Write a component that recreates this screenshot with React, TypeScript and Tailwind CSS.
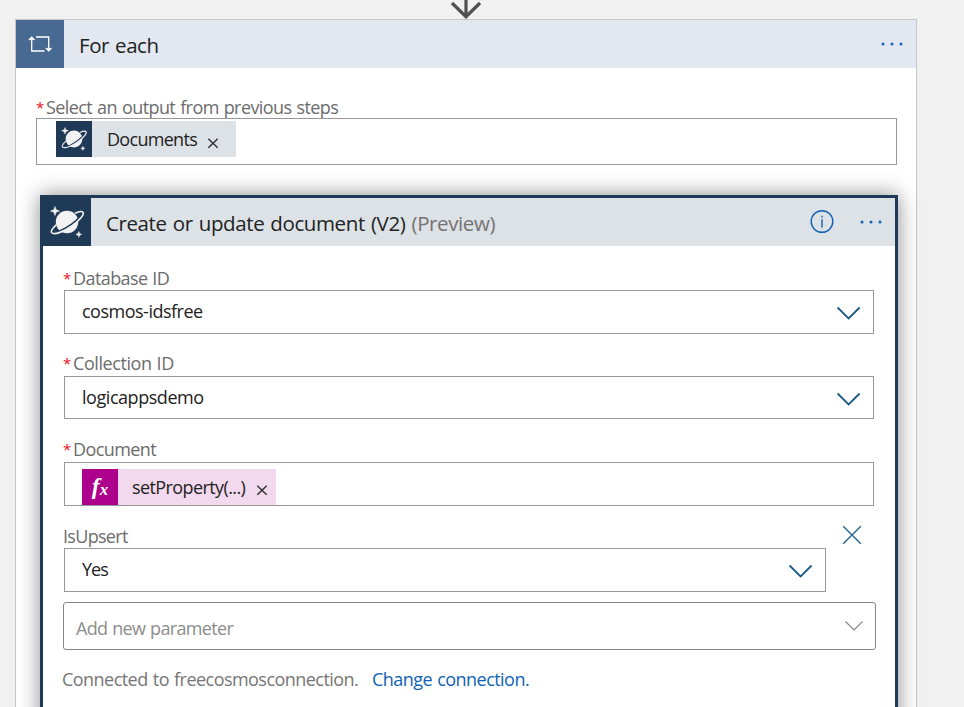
import type { ReactNode } from 'react';

function Planet({ className }: { className: string }) {
  return (
    <svg viewBox="0 0 48 48" className={className} fill="none">
      <circle cx="24" cy="24" r="11.2" fill="#f2f2f2" />
      <path d="M9.4 34C13 35.4 21.5 31.6 28.7 26.3C35.5 21.2 39.3 16.5 38.8 14.8" stroke="#1e3a56" strokeWidth="1.9" />
      <path d="M13.2 26.8C9.5 30.2 7.6 33.4 8.8 34.8C11.2 37.2 21 33.7 29.5 27.5C37 22 41.7 16.3 40 14.3C38.6 12.9 35.4 13.7 32 15.3" stroke="#f2f2f2" strokeWidth="1.6" />
      <path d="M12 8.5L13.2 11.8L16.5 13L13.2 14.2L12 17.5L10.8 14.2L7.5 13L10.8 11.8Z" fill="#f2f2f2" stroke="#f2f2f2" strokeWidth=".5" />
      <path d="M35.8 33.5L36.6 35.6L38.7 36.4L36.6 37.2L35.8 39.3L35 37.2L32.9 36.4L35 35.6Z" fill="#f2f2f2" stroke="#f2f2f2" strokeWidth=".5" />
    </svg>
  );
}

function Dots() {
  return (
    <svg viewBox="0 0 24 4" className="h-1 w-6 shrink-0" fill="#0f62b5">
      <circle cx="3" cy="2" r="1.5" />
      <circle cx="12" cy="2" r="1.5" />
      <circle cx="21" cy="2" r="1.5" />
    </svg>
  );
}

function Chevron() {
  return (
    <svg viewBox="0 0 24 14" className="mt-0.5 h-3.5 w-6 shrink-0" fill="none" stroke="#1c5a86" strokeWidth="1.8">
      <path d="M.6 1.5L11.6 12.4L22.6 1.5" />
    </svg>
  );
}

function Remove() {
  return (
    <svg viewBox="0 0 12 12" className="size-3 shrink-0" fill="none" stroke="#333" strokeWidth="1.5">
      <path d="M1.3 1.7L10.7 10.8M10.7 1.7L1.3 10.8" />
    </svg>
  );
}

function Label({ children, required = true }: { children: ReactNode; required?: boolean }) {
  return (
    <div className="flex h-6 items-center whitespace-nowrap text-[18px] leading-6 tracking-[-0.58px] [word-spacing:0.7px] text-[#6c6c6c]">
      {required && <span className="w-2.5 shrink-0 text-[15px] leading-6 text-[#e81123]">*</span>}
      {children}
    </div>
  );
}

export default function App() {
  return (
    <div className="flex h-[707px] w-[964px] flex-col overflow-hidden bg-[#f1f1f1] font-['Open_Sans','Noto_Sans',sans-serif] text-[#222]">
      <div className="flex h-[19px] shrink-0 pl-[450px]">
        <svg viewBox="0 0 32 19" className="h-[19px] w-8" fill="none" stroke="#505050" strokeWidth="3.2">
          <path d="M16 0V16.5M2 3L16 16.7L30 3" />
        </svg>
      </div>
      <section className="ml-[15px] h-[720px] w-[902px] shrink-0 border border-[#c6c6c6] bg-white">
        <header className="flex h-12 items-center bg-[#e3e8f0] pr-3">
          <div className="flex size-12 items-center justify-center bg-[#486991]">
            <svg viewBox="0 0 24 18" className="h-[18px] w-6" fill="none" stroke="#fff" strokeWidth="1.3">
              <path d="M3.7 2V16H16.5M.9 5L3.7 2.2L6.5 5M8 2H20.7V16M17.9 13L20.7 15.8L23.5 13" />
              <path d="M1.5 4.8L3.7 2.4L5.9 4.8ZM18.5 13.2L20.7 15.6L22.9 13.2Z" fill="#fff" stroke="none" />
            </svg>
          </div>
          <h1 className="mt-0.5 ml-[15px] flex-1 text-[20.5px] leading-7 tracking-[-0.4px] [word-spacing:1px]">For each</h1>
          <Dots />
        </header>
        <div className="px-5 pt-[27px]">
          <Label><span className="tracking-[-0.59px] [word-spacing:0.9px]">Select an output from previous steps</span></Label>
          <div className="-mt-px -mr-px h-[47px] border border-[#979797] pt-0.5 pl-[19px]">
            <div className="flex h-9 w-[180px] items-center bg-[#dde2e6]">
              <div className="size-9 bg-[#1e3a56]"><Planet className="size-9" /></div>
              <span className="ml-[15px] w-[100px] text-[18px] tracking-[-0.7px] whitespace-nowrap">Documents</span>
              <div className="mt-2"><Remove /></div>
            </div>
          </div>
        </div>
        <section className="mt-[30px] ml-6 h-[560px] w-[858px] border-[3px] border-[#1e3a56] bg-white shadow-[0_0_20px_rgba(0,0,0,0.45)]">
          <header className="flex h-12 items-center bg-[#dde2e6] pr-3">
            <div className="size-12 bg-[#1e3a56]"><Planet className="size-12" /></div>
            <h2 className="mt-0.5 ml-[15px] flex-1 text-[20.5px] leading-7 tracking-[-0.4px] [word-spacing:1.2px] whitespace-nowrap">
              Create or update document (V2) <span className="text-[#737373]">(Preview)</span>
            </h2>
            <svg viewBox="0 0 24 24" className="mr-[25px] size-6" fill="none" stroke="#0f62b5" strokeWidth="1.4">
              <circle cx="12" cy="11.5" r="10.8" />
              <path d="M12 9.3V17.5M12 5.7V7.5" />
            </svg>
            <Dots />
          </header>
          <div className="flex flex-col pt-5 pr-[18px] pl-5">
            <Label>Database ID</Label>
            <div className="ml-px flex h-11 w-[810px] items-center justify-between border border-[#979797] pr-3 pl-[17px] text-[18px] tracking-[-0.5px]"><span className="-mt-px">cosmos-idsfree</span><Chevron /></div>
            <div className="mt-[17px]"><Label><span className="tracking-[-0.42px]">Collection ID</span></Label></div>
            <div className="mt-px ml-px flex h-[43px] w-[810px] items-center justify-between border border-[#979797] pr-3 pl-[17px] text-[18px] tracking-[-0.45px]"><span>logicappsdemo</span><Chevron /></div>
            <div className="mt-[18px]"><Label>Document</Label></div>
            <div className="mt-px ml-px h-11 w-[810px] border border-[#979797] pt-1.5 pl-[17px]">
              <div className="flex h-9 w-[194px] items-center bg-[#f2d9ed]">
                <div className="flex size-9 items-center justify-center bg-[#ad008c] font-['Liberation_Serif',serif] text-[24px] leading-none font-bold text-white italic"><span className="-mt-0.5">f</span><span className="mt-1 text-[17px]">x</span></div>
                <span className="ml-[14px] w-[124px] text-[18px] tracking-[-0.6px] whitespace-nowrap">setProperty(...)</span>
                <div className="mt-1.5"><Remove /></div>
              </div>
            </div>
            <div className="mt-[18px] flex h-6 items-start justify-between pr-[15px]">
              <Label required={false}><span className="tracking-[-0.7px]">IsUpsert</span></Label>
              <svg viewBox="0 0 20 20" className="mt-px size-5" fill="none" stroke="#236590" strokeWidth="1.4"><path d="M1.2 1.2L18.8 18.8M18.8 1.2L1.2 18.8" /></svg>
            </div>
            <div className="ml-px flex h-11 w-[762px] items-center justify-between border border-[#979797] pr-3 pl-[17px] text-[18px] tracking-[-1px]"><span className="-mt-px">Yes</span><Chevron /></div>
            <div className="mt-2.5 flex h-12 w-[813px] items-center justify-between rounded-[3px] border border-[#858585] pr-3 pl-3 text-[18px] tracking-[-0.65px] [word-spacing:0.7px] text-[#8c8c8c]">
              <span className="mt-1">Add new parameter</span>
              <svg viewBox="0 0 18 10" className="h-2.5 w-[18px]" fill="none" stroke="#888" strokeWidth="1.2"><path d="M.5 .5L9 9L17.5 .5" /></svg>
            </div>
            <div className="mt-[17px] flex h-6 items-center text-[18px] tracking-[-0.54px] [word-spacing:1px] whitespace-nowrap text-[#767676]"><span className="-ml-px w-[310px]">Connected to freecosmosconnection.</span><span className="text-[#0f62b5]">Change connection.</span></div>
          </div>
        </section>
      </section>
    </div>
  );
}
